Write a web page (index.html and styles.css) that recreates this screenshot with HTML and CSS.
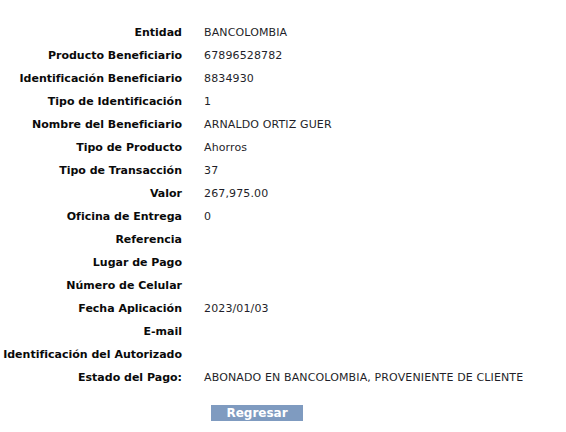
FILE: index.html
```html
<!DOCTYPE html>
<html lang="es">
<head>
    <meta charset="UTF-8">
    <title>Detalle del Pago</title>
    <link rel="stylesheet" href="styles.css">
</head>
<body>
    <main class="detalle">
        <dl class="detalle-lista">
            <dt>Entidad</dt><dd>BANCOLOMBIA</dd>
            <dt>Producto Beneficiario</dt><dd>67896528782</dd>
            <dt>Identificación Beneficiario</dt><dd>8834930</dd>
            <dt>Tipo de Identificación</dt><dd>1</dd>
            <dt>Nombre del Beneficiario</dt><dd>ARNALDO ORTIZ GUER</dd>
            <dt>Tipo de Producto</dt><dd>Ahorros</dd>
            <dt>Tipo de Transacción</dt><dd>37</dd>
            <dt>Valor</dt><dd>267,975.00</dd>
            <dt>Oficina de Entrega</dt><dd>0</dd>
            <dt>Referencia</dt><dd></dd>
            <dt>Lugar de Pago</dt><dd></dd>
            <dt>Número de Celular</dt><dd></dd>
            <dt>Fecha Aplicación</dt><dd>2023/01/03</dd>
            <dt>E-mail</dt><dd></dd>
            <dt>Identificación del Autorizado</dt><dd></dd>
            <dt>Estado del Pago:</dt><dd>ABONADO EN BANCOLOMBIA, PROVENIENTE DE CLIENTE</dd>
        </dl>
        <div class="acciones">
            <button type="button" class="btn-regresar">Regresar</button>
        </div>
    </main>
</body>
</html>
```

FILE: styles.css
```css
* { box-sizing: border-box; margin: 0; padding: 0; }
body {
    font-family: 'DejaVu Sans', Verdana, sans-serif;
    font-size: 11px;
    color: #1a1a1a;
    background: #ffffff;
}
.detalle { padding-top: 21px; }
.detalle-lista {
    display: grid;
    grid-template-columns: 182px auto;
    grid-auto-rows: 23px;
    column-gap: 22px;
    align-items: center;
}
.detalle-lista dt { font-weight: bold; text-align: right; color: #0a0a0a; white-space: nowrap; }
.detalle-lista dd { color: #1f1f2a; white-space: nowrap; letter-spacing: 0.13px; }
.acciones { padding: 16px 0 0 211px; }
.btn-regresar {
    width: 92px; height: 16px; border: none;
    background-color: #7f9bc0; color: #ffffff;
    font-family: 'DejaVu Sans', Verdana, sans-serif;
    font-size: 12px; font-weight: bold; line-height: 16px;
    cursor: pointer;
}
```
